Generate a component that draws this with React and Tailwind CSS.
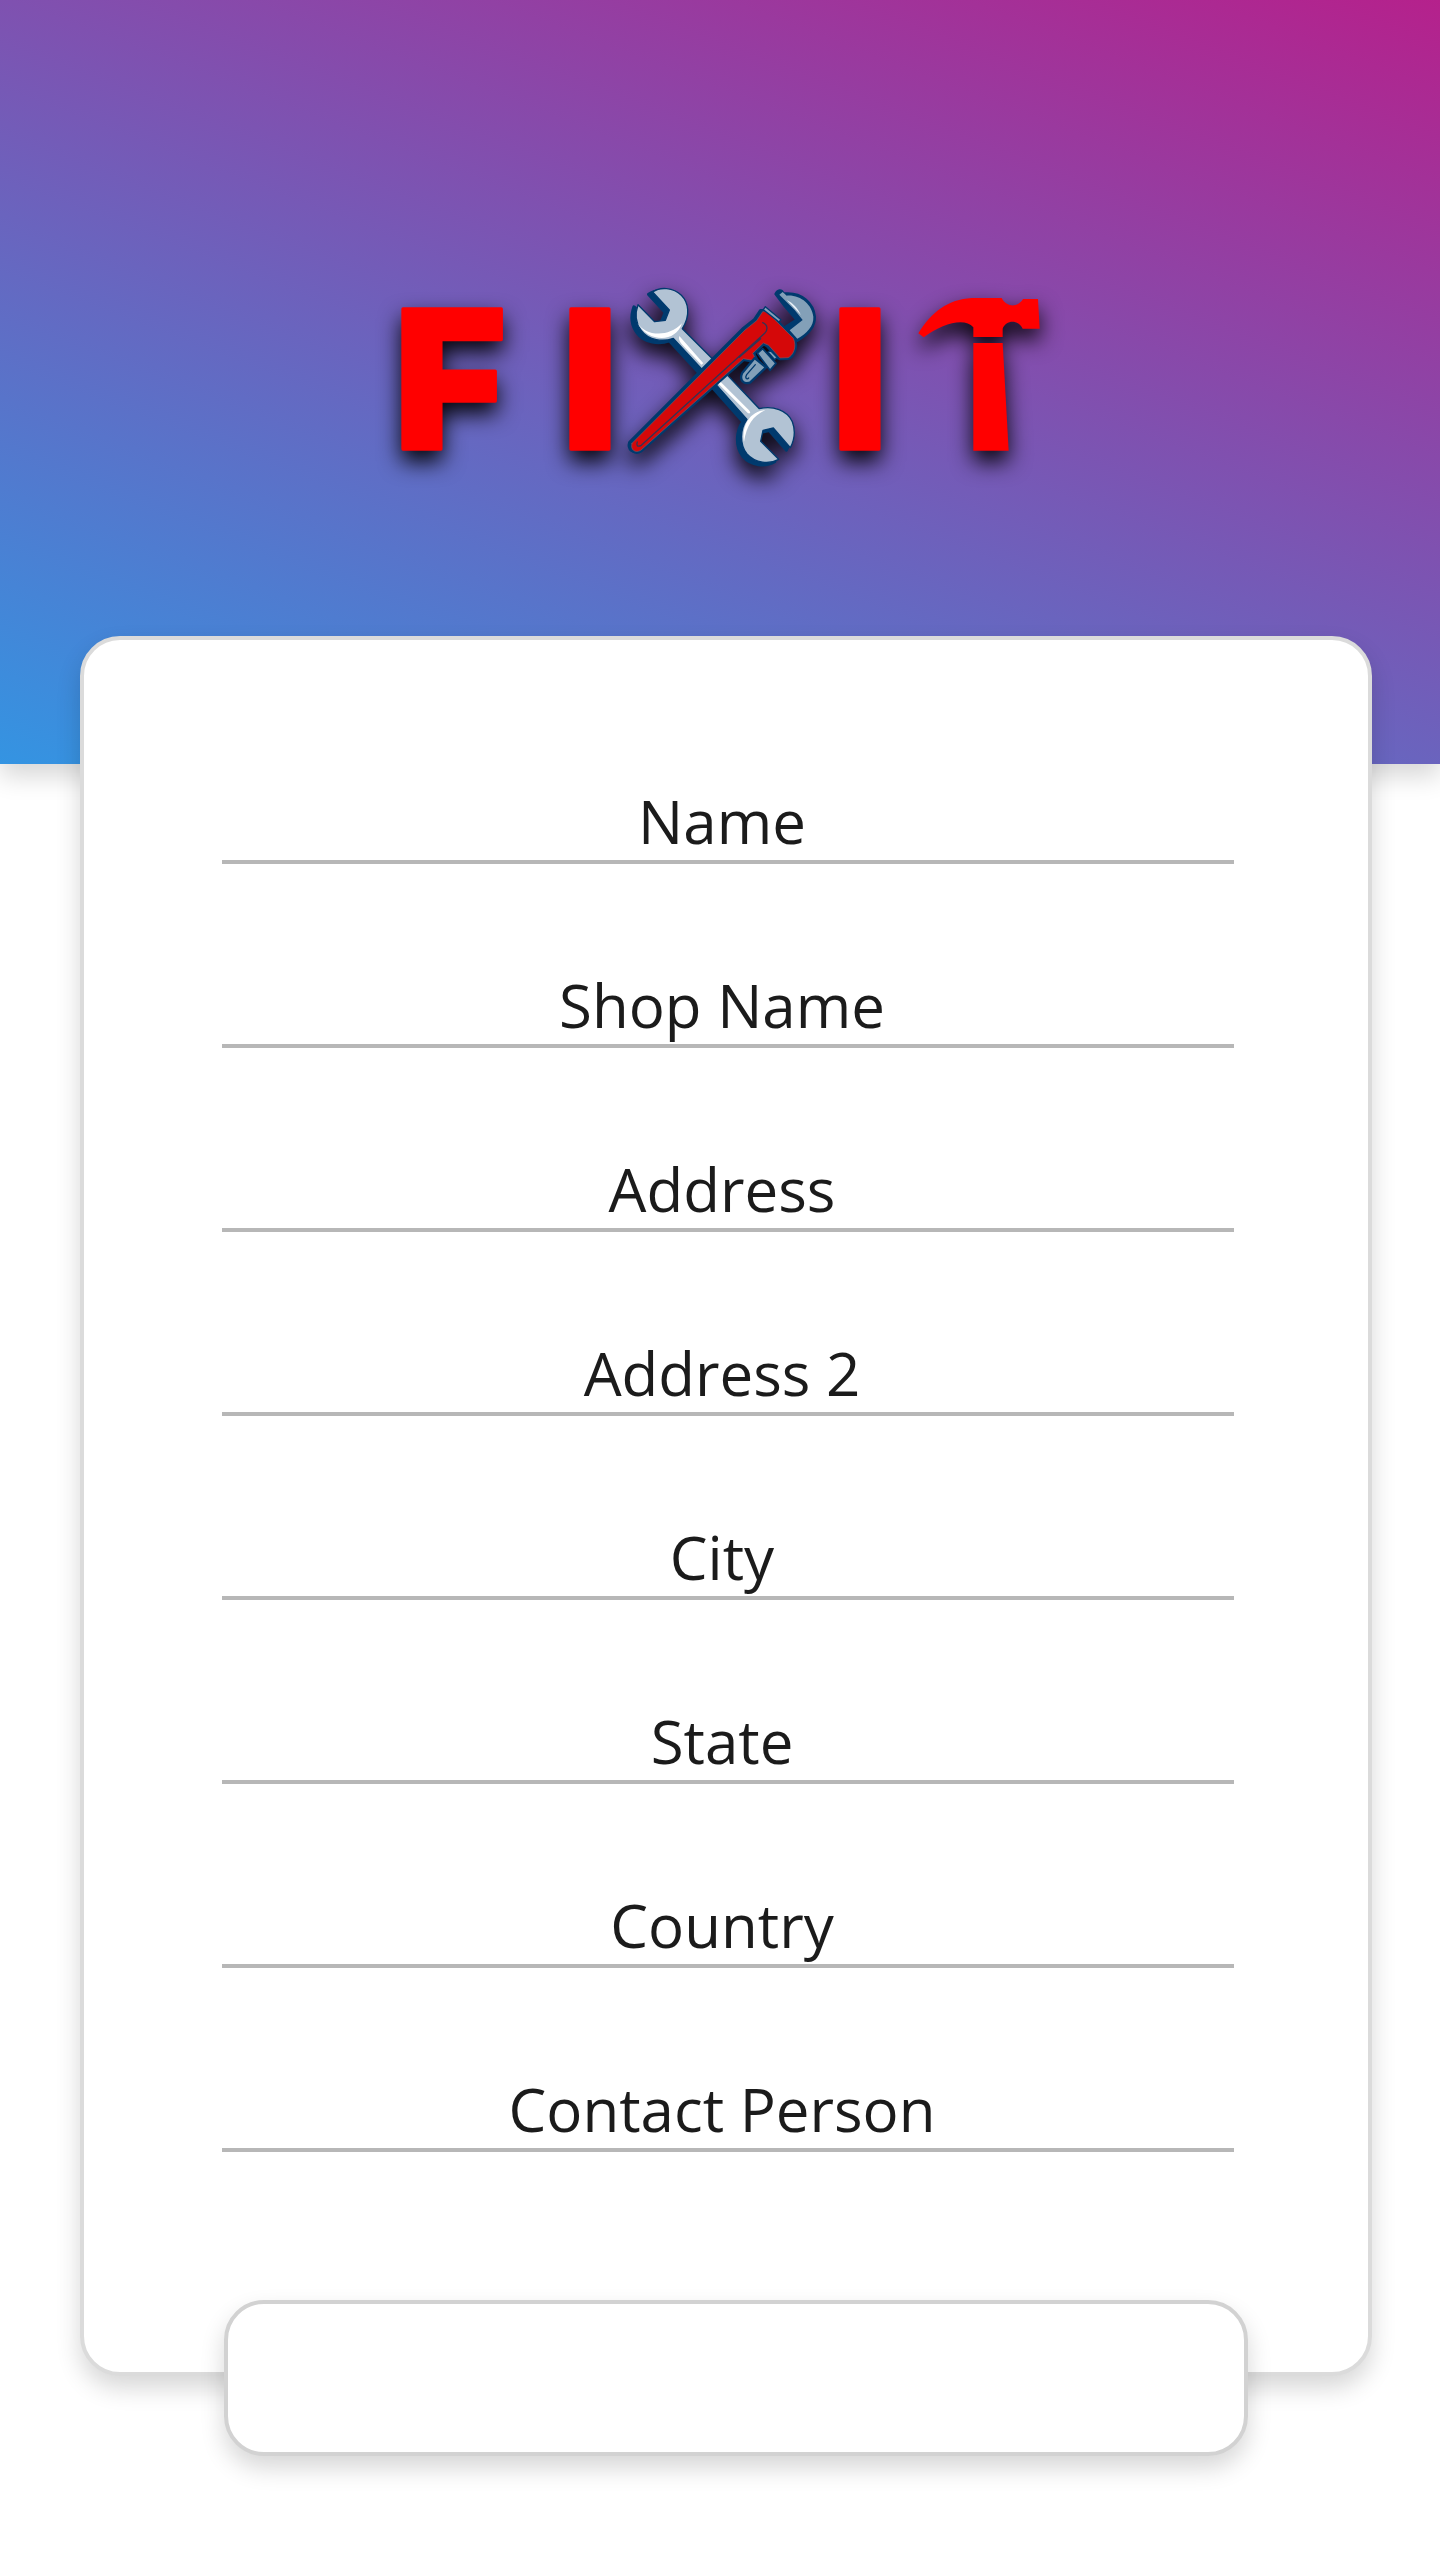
const fields = [
  { name: "name", label: "Name" },
  { name: "shop-name", label: "Shop Name" },
  { name: "address", label: "Address" },
  { name: "address-2", label: "Address 2" },
  { name: "city", label: "City" },
  { name: "state", label: "State" },
  { name: "country", label: "Country" },
  { name: "contact-person", label: "Contact Person" },
];

const spanner =
  "M128 66 C150 50 190 52 214 76 C236 98 242 136 217 176 L307 266 L352 315 L448 416 C488 406 532 420 547 455 C557 482 554 508 541 533 L490 474 L459 481 L452 514 L506 568 C478 584 436 580 411 552 C388 522 390 478 411 448 L315 340 L275 297 L190 205 C160 216 116 212 94 182 C76 158 74 132 84 104 L134 155 L166 151 L178 120 Z";

const pipeBody =
  "M66 520 L405 180 L440 152 L458 125 L470 125 L550 205 C562 232 548 258 534 263 L510 264 L476 226 L460 219 L428 250 L440 273 L400 266 L92 541 C76 550 60 540 66 520 Z";

function Logo() {
  return (
    <svg
      viewBox="0 0 2100 660"
      role="img"
      aria-label="FIXIT"
      className="w-[700px] max-w-full overflow-visible drop-shadow-[0_11px_11px_rgba(0,0,0,0.95)]"
    >
      <g
        fill="#ff0000"
        stroke="#ff0000"
        strokeWidth="10"
        strokeLinejoin="round"
        fontFamily="Inter, 'Liberation Sans', sans-serif"
        fontWeight="900"
        fontSize="576"
      >
        <text x="72" y="537">F</text>
        <text x="660" y="537" textAnchor="middle">I</text>
        <text x="1470" y="537" textAnchor="middle">I</text>
      </g>

      {/* Hammer */}
      <g fill="#ff0000">
        <path d="M1645 190 C1684 126 1734 88 1805 84 H1895 C1910 113 1944 113 1959 87 H2004 L2009 176 H1958 C1946 148 1908 148 1898 176 V201 H1810 V172 C1784 142 1718 160 1661 202 Z" />
        <path d="M1810 219 H1898 L1916 542 H1810 Z" />
      </g>

      {/* Crossed spanner and pipe wrench */}
      <g transform="translate(720 0)" strokeLinejoin="round" strokeLinecap="round">
        <path d={spanner} transform="translate(-12 7)" fill="#003a6e" stroke="#003a6e" strokeWidth="10" />
        <path d={spanner} fill="#b2c3d4" stroke="#003a6e" strokeWidth="4" />
        <path d="M82 158 C102 194 170 208 216 160 C196 222 112 216 82 158 Z" fill="#fff" />
        <path d="M208 198 C204 210 212 220 226 234 L274 284 L280 280 Z" fill="#fff" />
        <path d="M322 338 L414 430 C424 432 422 426 414 418 L330 334 Z" fill="#fff" />
        <path d="M402 516 C394 466 420 424 466 420 C428 438 410 466 402 516 Z" fill="#fff" />

        <path
          d="M497 72 C503 60 514 58 520 70 L532 71 C574 70 610 98 614 140 C616 172 592 194 562 212 L540 186 L528 170 L560 150 L524 108 Z"
          fill="#003a6e"
          stroke="#003a6e"
          strokeWidth="8"
        />
        <path
          d="M508 74 L518 66 L530 77 C572 74 606 104 610 140 C612 168 590 190 562 206 L539 181 L578 150 L554 120 Z"
          fill="#83a0b8"
        />
        <path d="M530 90 L572 134 C564 116 548 98 530 90 Z" fill="#e8f0f7" />

        <path d={pipeBody} transform="translate(-6 -2)" fill="#003a6e" stroke="#003a6e" strokeWidth="12" />
        <path d={pipeBody} fill="#003a6e" stroke="#003a6e" strokeWidth="14" />
        <path d={pipeBody} fill="#d50809" stroke="#7a5560" strokeWidth="2" />
        <path
          d="M458 158 C474 164 474 180 464 190 L94 526 C82 532 78 526 82 516 M388 262 L452 206"
          fill="none"
          stroke="#343354"
          strokeWidth="4"
        />
        <path d="M466 110 L513 149 L507 156 L460 119 Z" fill="#83a0b8" stroke="#003a6e" strokeWidth="4" />

        <path
          d="M434 264 L396 310 C388 330 400 344 420 338 L468 292 Z"
          fill="#83a0b8"
          stroke="#003a6e"
          strokeWidth="7"
        />
        <path d="M436 284 L410 314 C404 324 410 330 416 324" fill="none" stroke="#003a6e" strokeWidth="4" />
        <path d="M442 250 L458 236 L498 280 L480 301 Z" fill="#83a0b8" stroke="#003a6e" strokeWidth="5" />
        <path d="M474 246 L482 242 L501 262 L494 269 Z" fill="#83a0b8" stroke="#003a6e" strokeWidth="4" />
      </g>
    </svg>
  );
}

export default function App() {
  return (
    <div className="min-h-screen bg-white pb-[104px] font-['Open_Sans','Noto_Sans',sans-serif] text-[#1b1b1b]">
      <header className="flex h-[764px] items-start justify-center bg-[linear-gradient(21deg,#3494e2,#b5218c)] pt-[270px] shadow-[0_12px_24px_rgba(0,0,0,0.16)]">
        <Logo />
      </header>

      <form className="relative -mt-32" onSubmit={(event) => event.preventDefault()}>
        <div className="mr-[68px] ml-20 flex flex-col gap-[104px] rounded-[40px] border-4 border-[#dbdbdb] bg-white pt-36 pr-[134px] pb-[220px] pl-[138px] shadow-[0_12px_24px_rgba(0,0,0,0.16)]">
          {fields.map((field) => (
            <input
              key={field.name}
              type="text"
              name={field.name}
              aria-label={field.label}
              placeholder={field.label}
              className="h-20 w-full border-b-4 border-[#b7b7b7] bg-transparent pr-3 pb-0.5 text-center text-[60px] leading-[74px] outline-none placeholder:text-[#1b1b1b]"
            />
          ))}
        </div>
        <div className="relative -mt-[76px] mr-48 ml-56 flex">
          <button
            type="submit"
            aria-label="Submit"
            className="h-[156px] w-full rounded-[40px] border-4 border-[#d2d2d2] bg-white shadow-[0_12px_24px_rgba(0,0,0,0.16)]"
          />
        </div>
      </form>
    </div>
  );
}
